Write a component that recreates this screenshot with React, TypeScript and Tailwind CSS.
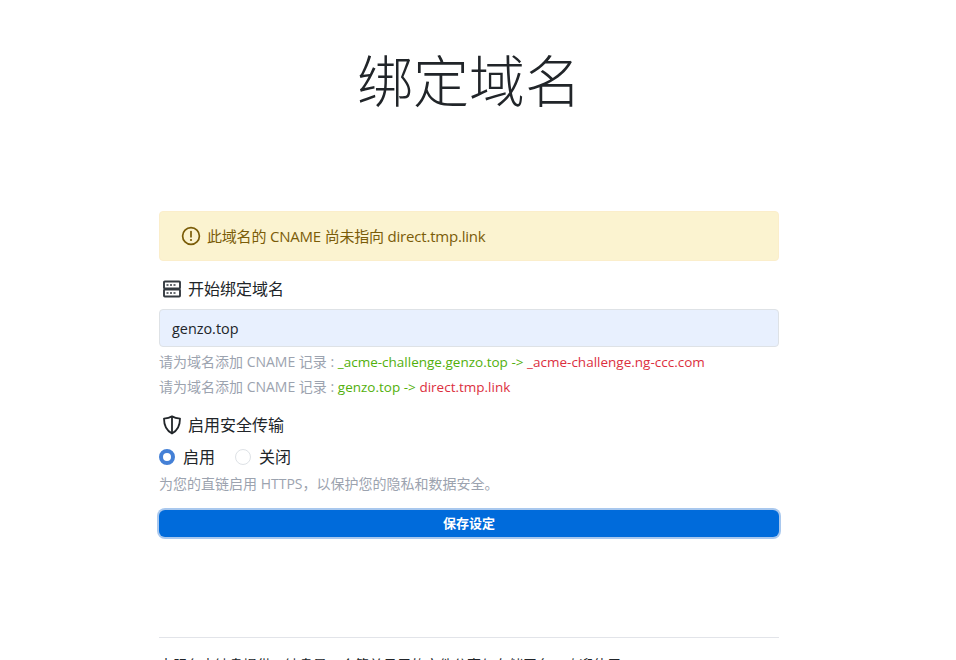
const FONT = "font-['Open_Sans','Noto_Sans_CJK_SC',sans-serif]";

function AlertIcon() {
  return (
    <svg width="20" height="20" viewBox="0 0 20 20" fill="none" stroke="currentColor" strokeWidth="1.7" strokeLinecap="round" className="shrink-0">
      <circle cx="10" cy="10" r="8.4" />
      <path d="M10 5.6v5.2" />
      <path d="M10 14h.01" strokeWidth="2.2" />
    </svg>
  );
}

function ServerIcon() {
  return (
    <svg width="18" height="18" viewBox="0 0 18 18" fill="none" stroke="#343a40" strokeWidth="1.9" className="shrink-0">
      <rect x="1" y="1.500" width="16" height="7" rx="0.8" />
      <rect x="1" y="9.500" width="16" height="7" rx="0.8" />
      <path d="M3.500 5h2M7 5h2M10.500 5h2M3.500 13h2M7 13h2M10.500 13h2" strokeWidth="1.300" />
    </svg>
  );
}

function ShieldIcon() {
  return (
    <svg width="20" height="20" viewBox="0 0 20 20" fill="none" stroke="#212529" strokeWidth="1.8" strokeLinejoin="round" className="shrink-0">
      <path d="M10 1.400c2.600 1.500 5.200 2 8 2.200 0 6.800-1.800 11.800-8 14.900C3.800 15.400 2 10.400 2 3.600 4.800 3.400 7.400 2.900 10 1.400Z" />
      <path d="M10 2v16" />
    </svg>
  );
}

function Radio({ label, checked }: { label: string; checked?: boolean }) {
  return (
    <label className="flex items-center">
      {checked ? (
        <span className="w-4 h-4 rounded-full border-[4px] border-[#4480d6] bg-white" />
      ) : (
        <span className="w-4 h-4 rounded-full border border-[#dee2e6] bg-white" />
      )}
      <span className="ml-2 text-[16px] leading-[24px] text-[#212529]">{label}</span>
    </label>
  );
}

export default function App() {
  return (
    <div className={`h-screen overflow-hidden bg-white text-[#212529] ${FONT}`}>
      <div className="w-[938px] flex flex-col items-center">
        <h1 className="mt-[36px] h-[88px] text-[56px] leading-[88px] font-light text-[#212529]">绑定域名</h1>

        <div className="w-[620px] mt-[87px]">
          <div className="h-[50px] flex items-center pl-[21px] gap-[6px] rounded border border-[#fbeecb] bg-[#fbf3d0] text-[15px] text-[#7a5c08]">
            <AlertIcon />
            <span className="tracking-[-0.2px]">此域名的 CNAME 尚未指向 direct.tmp.link</span>
          </div>

          <div className="mt-[18px] h-[20px] flex items-center pl-[4px] gap-[7px] text-[16px]">
            <ServerIcon />
            <span>开始绑定域名</span>
          </div>

          <div className="mt-[10px] h-[38px] flex items-center px-[12px] pt-[1px] rounded border border-[#dee2e6] bg-[#e8f0fe] text-[14.400px] text-[#212529]">
            genzo.top
          </div>

          <div className="mt-[5px] text-[14px] leading-[20px] text-[#9ca3af] whitespace-nowrap">
            请为域名添加 CNAME 记录 : <span className="text-[13.500px] text-[#52b00b]">_acme-challenge.genzo.top -&gt;</span>{" "}
            <span className="text-[13.500px] text-[#dc2f3e]">_acme-challenge.ng-ccc.com</span>
          </div>
          <div className="mt-[5px] text-[14px] leading-[20px] text-[#9ca3af] whitespace-nowrap">
            请为域名添加 CNAME 记录 : <span className="text-[13.500px] text-[#52b00b]">genzo.top -&gt;</span>{" "}
            <span className="text-[13.500px] text-[#dc2f3e]">direct.tmp.link</span>
          </div>

          <div className="mt-[18px] h-[20px] flex items-center pl-[3px] gap-[6px] text-[16px]">
            <ShieldIcon />
            <span>启用安全传输</span>
          </div>

          <div className="mt-[11px] h-[22px] flex items-center gap-[20px]">
            <Radio label="启用" checked />
            <Radio label="关闭" />
          </div>

          <p className="mt-[6px] text-[14px] leading-[20px] text-[#9ca3af]">
            为您的直链启用 HTTPS，以保护您的隐私和数据安全。
          </p>

          <button className="mt-[16px] w-full h-[27px] rounded-md bg-[#006bdb] text-white text-[13px] font-bold ring-2 ring-[#a9c8ee]">
            保存设定
          </button>

          <div className="mt-[100px] pt-[16px] border-t border-[#e2e4e9] text-[14px] text-[#212529] whitespace-nowrap">
            本服务由钛盘提供，钛盘是一个简单易用的文件分享与存储平台，欢迎使用。
          </div>
        </div>
      </div>
    </div>
  );
}
